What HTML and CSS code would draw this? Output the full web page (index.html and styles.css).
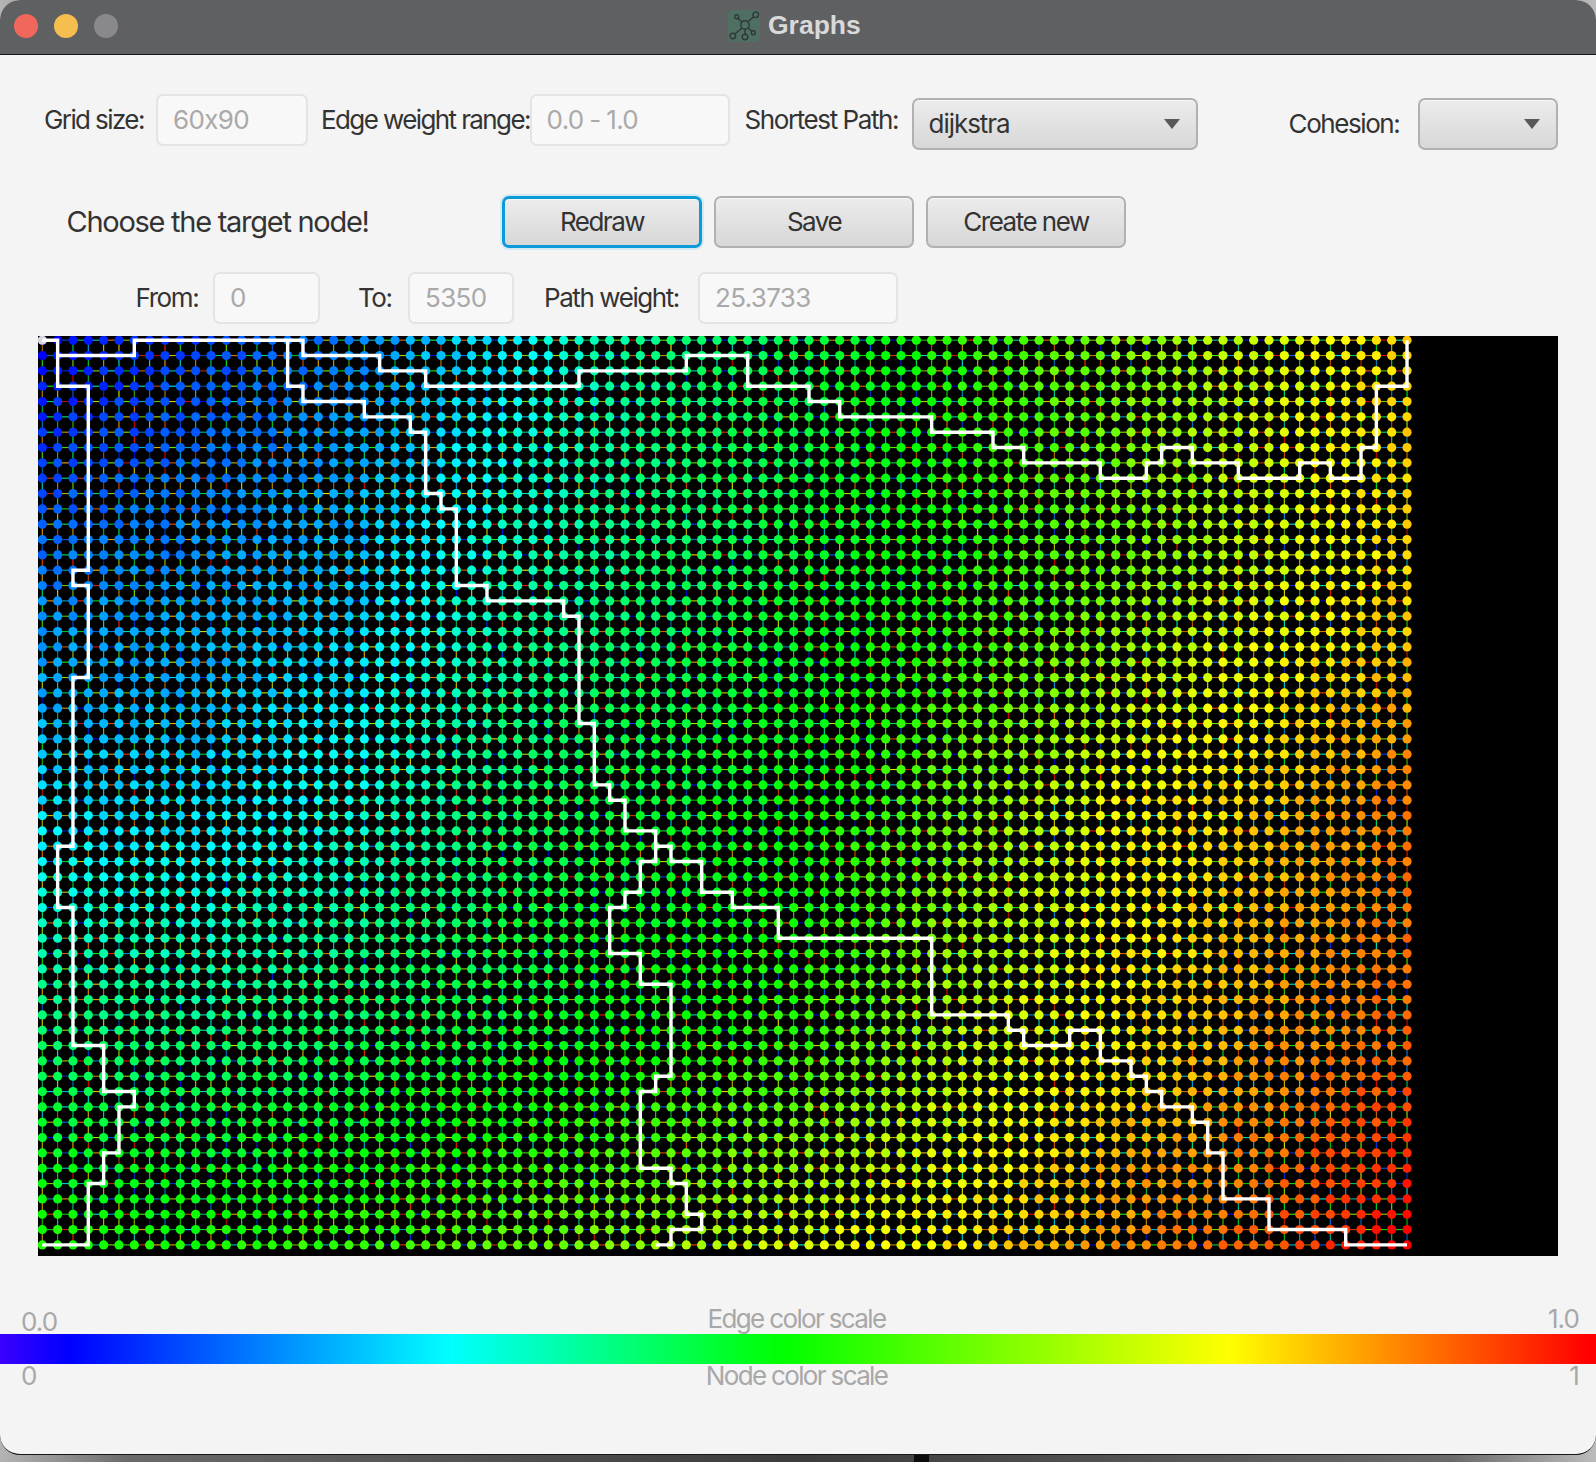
FILE: index.html
```html
<!DOCTYPE html>
<html lang="en">
<head>
<meta charset="utf-8">
<title>Graphs</title>
<link rel="stylesheet" href="styles.css">
</head>
<body>
<div class="window">
  <header class="titlebar">
    <div class="lights">
      <span class="light light-red"></span>
      <span class="light light-yellow"></span>
      <span class="light light-gray"></span>
    </div>
    <div class="title">
      <svg class="app-icon" width="32" height="32" viewBox="0 0 32 32">
        <rect width="32" height="32" rx="5" fill="#4f6f62"/>
        <g fill="none" stroke="#30383a" stroke-width="1.4">
          <path d="M9.6 8 L14 12 M19.5 12 L25.7 6.8 M14 18 L6.8 24 M17 19 L17 24 M20 17.5 L23.8 21.5"/>
          <circle cx="17" cy="15" r="4.2"/>
          <circle cx="8.7" cy="6.8" r="2"/>
          <circle cx="27.7" cy="4.8" r="2.8"/>
          <circle cx="4.8" cy="26" r="2.8"/>
          <circle cx="17" cy="27" r="2.8"/>
          <circle cx="25.3" cy="22.8" r="2"/>
        </g>
      </svg>
      <span class="title-text">Graphs</span>
    </div>
  </header>
  <main class="content">
    <div class="row row-settings">
      <label class="label label-tight w-grid">Grid size:</label>
      <div class="field w-f-grid">60x90</div>
      <label class="label label-tight w-edge">Edge weight range:</label>
      <div class="field w-f-edge">0.0 - 1.0</div>
      <label class="label w-short">Shortest Path:</label>
      <div class="combo w-c-path"><span>dijkstra</span><i class="arrow"></i></div>
      <label class="label w-cohesion">Cohesion:</label>
      <div class="combo w-c-cohesion"><span></span><i class="arrow"></i></div>
    </div>
    <div class="row row-actions">
      <div class="prompt">Choose the target node!</div>
      <button class="btn btn-focus">Redraw</button>
      <button class="btn">Save</button>
      <button class="btn">Create new</button>
    </div>
    <div class="row row-path">
      <label class="label w-from">From:</label>
      <div class="field w-f-from">0</div>
      <label class="label w-to">To:</label>
      <div class="field w-f-to">5350</div>
      <label class="label w-weight">Path weight:</label>
      <div class="field w-f-weight">25.3733</div>
    </div>
    <canvas id="graph" class="graph" width="1520" height="920"></canvas>
    <section class="scale">
      <div class="scale-row">
        <span class="scale-min">0.0</span>
        <span class="scale-name">Edge color scale</span>
        <span class="scale-max">1.0</span>
      </div>
      <div class="scale-bar"></div>
      <div class="scale-row scale-row-node">
        <span>0</span>
        <span class="scale-name">Node color scale</span>
        <span class="scale-max">1</span>
      </div>
    </section>
  </main>
</div>
<div class="dock-mark"></div>
<script src="script.js"></script>
</body>
</html>
```
FILE: styles.css
```css
* { box-sizing: border-box; }
html, body { margin: 0; height: 1462px; overflow: hidden; }
body {
  position: relative;
  font-family: Inter, "Liberation Sans", sans-serif;
  font-size: 26px;
  color: #333;
  background: linear-gradient(90deg, #b4b4b4 0, #6a6a6a 8%, #3c3c3c 50%, #6a6a6a 91%, #bcbcbc 100%);
}
.window {
  height: 1455px;
  background: #f4f4f4;
  border-radius: 20px;
  border-bottom: 1px solid #161616;
  overflow: hidden;
  display: flex;
  flex-direction: column;
}
.dock-mark {
  position: absolute;
  left: 914px;
  top: 1455px;
  width: 15px;
  height: 7px;
  background: #0c0c0c;
}
.titlebar {
  height: 55px;
  flex: none;
  display: flex;
  align-items: center;
  background: #5f6062;
  border-bottom: 1px solid #141414;
  padding-bottom: 2px;
}
.lights { display: flex; gap: 16px; margin-left: 14px; }
.light { width: 24px; height: 24px; border-radius: 50%; }
.light-red { background: #f1675b; }
.light-yellow { background: #f6bd4f; }
.light-gray { background: #89898b; }
.title { display: flex; align-items: center; margin-left: 610px; }
.app-icon { display: block; }
.title-text {
  margin: 0 0 2px 8px;
  font-family: "Liberation Sans", sans-serif;
  font-weight: 700;
  font-size: 26.5px;
  color: #d9d9d9;
}
.content { flex: 1; display: flex; flex-direction: column; }
.row { display: flex; align-items: flex-start; flex: none; white-space: nowrap; }
.row-settings { margin-top: 39px; padding-left: 44px; height: 56px; }
.row-actions { margin-top: 46px; padding-left: 66.5px; height: 52px; }
.row-path { margin-top: 24px; padding-left: 135.5px; height: 51px; }
.label {
  height: 51px;
  display: flex;
  align-items: center;
  letter-spacing: -1.42px;
  color: #333;
}
.label-tight { letter-spacing: -1.6px; }
.w-grid { width: 112px; }
.w-edge { width: 208.6px; margin-left: 13px; }
.w-short { width: 167px; margin-left: 15px; }
.w-cohesion { width: 129px; margin-left: 90.6px; margin-top: 4px; }
.w-from { width: 77.5px; }
.w-to { width: 50px; margin-left: 38px; }
.w-weight { width: 154px; margin-left: 30px; }
.field {
  height: 52px;
  display: flex;
  align-items: center;
  padding: 0 0 2px 15px;
  background: #f8f8f8;
  border: 2px solid #e4e4e4;
  border-radius: 7px;
  color: #a9a9a9;
  letter-spacing: -0.65px;
  word-spacing: -1px;
}
.w-f-grid { width: 152px; }
.w-f-edge { width: 200px; }
.w-f-from { width: 107px; }
.w-f-to { width: 106px; }
.w-f-weight { width: 200px; }
.combo {
  height: 52px;
  margin-top: 4px;
  display: flex;
  align-items: center;
  justify-content: space-between;
  padding: 0 16px 1px 15px;
  background: linear-gradient(180deg, #ececec 0, #d7d7d7 100%);
  border: 2px solid #b1b1b1;
  border-radius: 7px;
  box-shadow: inset 0 1px 0 #f6f6f6;
  color: #333;
  letter-spacing: -1.05px;
}
.w-c-path { width: 286.4px; }
.w-c-cohesion { width: 140.4px; }
.arrow {
  display: block;
  width: 0;
  height: 0;
  border-left: 8.5px solid transparent;
  border-right: 8.5px solid transparent;
  border-top: 10px solid #595959;
}
.prompt {
  width: 435.5px;
  height: 50px;
  display: flex;
  align-items: center;
  font-size: 29px;
  letter-spacing: -1.27px;
  color: #333;
}
.btn {
  width: 200px;
  height: 52px;
  margin-right: 12px;
  padding: 0 0 2px;
  font: inherit;
  letter-spacing: -1.5px;
  color: #333;
  background: linear-gradient(180deg, #ececec 0, #d7d7d7 100%);
  border: 2px solid #b1b1b1;
  border-radius: 7px;
  box-shadow: inset 0 1px 0 #f6f6f6;
}
.btn-focus {
  border: 3px solid #0a9bd8;
  box-shadow: 0 0 0 2px #d5e9f3, inset 0 1px 0 #f6f6f6;
}
.graph {
  display: block;
  flex: none;
  width: 1520px;
  height: 920px;
  margin: 13px 0 0 38px;
}
.scale { margin-top: 48px; flex: none; }
.scale-row {
  display: grid;
  grid-template-columns: 1fr auto 1fr;
  height: 30px;
  line-height: 30px;
  padding: 0 17px 0 21px;
  color: #a8a8a8;
  letter-spacing: -0.9px;
}
.scale-name { letter-spacing: -1.65px; margin-right: 7px; }
.scale-max { text-align: right; }
.scale-min { padding-top: 3px; }
.scale-row-node { margin-top: -3px; }
.scale-bar {
  height: 30px;
  background: linear-gradient(90deg, #3a00ff 0, #0000ff 4.4%, #00ffff 28.2%, #00ff00 49%, #ffff00 77%, #ff0000 99.5%);
}
```
FILE: script.js
```js
(function () {
  var ctx = document.getElementById('graph').getContext('2d');
  var COLS = 90, ROWS = 60, STEP = 15.334, OX = 4.3, OY = 4.2, NODE_R = 4.6;
  var seed = 12345;
  function rnd() {
    seed = (seed * 1664525 + 1013904223) >>> 0;
    var x = seed;
    x ^= x >>> 15;
    x = (x * 2654435761) >>> 0;
    x ^= x >>> 13;
    return (x >>> 0) / 4294967296;
  }
  var colKeys = [0, 10, 20, 30, 40, 50, 60, 70, 80, 89];
  var rowKeys = [0, 15, 30, 45, 59];
  var hues = [
    [240, 225, 210, 185, 150, 135, 110, 90, 70, 48],
    [212, 205, 195, 165, 145, 130, 115, 95, 70, 52],
    [190, 190, 175, 145, 130, 122, 92, 62, 48, 30],
    [145, 150, 140, 130, 122, 110, 76, 58, 38, 24],
    [115, 115, 108, 100, 85, 65, 55, 35, 20, 0]
  ];
  function locate(keys, v) {
    var i = 0;
    while (i < keys.length - 2 && v > keys[i + 1]) i++;
    return [i, (v - keys[i]) / (keys[i + 1] - keys[i])];
  }
  function hueAt(c, r) {
    var a = locate(colKeys, c), b = locate(rowKeys, r);
    var top = hues[b[0]][a[0]] * (1 - a[1]) + hues[b[0]][a[0] + 1] * a[1];
    var bot = hues[b[0] + 1][a[0]] * (1 - a[1]) + hues[b[0] + 1][a[0] + 1] * a[1];
    return top * (1 - b[1]) + bot * b[1];
  }
  function px(c) { return OX + STEP * c; }
  function py(r) { return OY + STEP * r; }

  ctx.fillStyle = '#000';
  ctx.fillRect(0, 0, 1520, 920);

  ctx.lineWidth = 1.15;
  function edge(x1, y1, x2, y2) {
    ctx.strokeStyle = 'hsl(' + Math.round(rnd() * 240) + ',100%,' + (34 + rnd() * 12) + '%)';
    ctx.beginPath();
    ctx.moveTo(x1, y1);
    ctx.lineTo(x2, y2);
    ctx.stroke();
  }
  var c, r;
  for (r = 0; r < ROWS; r++) {
    for (c = 0; c < COLS; c++) {
      if (c < COLS - 1) edge(px(c), py(r), px(c + 1), py(r));
      if (r < ROWS - 1) edge(px(c), py(r), px(c), py(r + 1));
    }
  }
  for (r = 0; r < ROWS; r++) {
    for (c = 0; c < COLS; c++) {
      var h = Math.max(0, Math.min(240, hueAt(c, r) + (rnd() - 0.5) * 9));
      ctx.fillStyle = 'hsl(' + h.toFixed(1) + ',100%,50%)';
      ctx.beginPath();
      ctx.arc(px(c), py(r), NODE_R, 0, Math.PI * 2);
      ctx.fill();
    }
  }
  ctx.fillStyle = '#d8d8d8';
  ctx.beginPath();
  ctx.arc(px(0), py(0), NODE_R, 0, Math.PI * 2);
  ctx.fill();

  var paths = [
    [[0,0],[1,0],[1,3],[3,3],[3,15],[2,15],[2,16],[3,16],[3,22],[2,22],[2,33],[1,33],[1,37],[2,37],[2,46],[4,46],[4,49],[6,49],[6,50],[5,50],[5,53],[4,53],[4,55],[3,55],[3,59],[0,59]],
    [[1,1],[6,1],[6,0],[17,0],[17,1],[22,1],[22,2],[25,2],[25,3],[35,3],[35,2],[42,2],[42,1],[46,1],[46,3],[50,3],[50,4],[52,4],[52,5],[58,5],[58,6],[62,6],[62,7],[64,7],[64,8],[69,8],[69,9],[72,9],[72,8],[73,8],[73,7],[75,7],[75,8],[78,8],[78,9],[82,9],[82,8],[84,8],[84,9],[86,9],[86,7],[87,7],[87,3],[89,3],[89,0]],
    [[16,0],[16,3],[17,3],[17,4],[21,4],[21,5],[24,5],[24,6],[25,6],[25,10],[26,10],[26,11],[27,11],[27,16],[29,16],[29,17],[34,17],[34,18],[35,18],[35,25],[36,25],[36,29],[37,29],[37,30],[38,30],[38,32],[40,32],[40,33],[41,33],[41,34],[43,34],[43,36],[45,36],[45,37],[48,37],[48,39],[58,39],[58,44],[63,44],[63,45],[64,45],[64,46],[67,46],[67,45],[69,45],[69,47],[71,47],[71,48],[72,48],[72,49],[73,49],[73,50],[75,50],[75,51],[76,51],[76,53],[77,53],[77,56],[80,56],[80,58],[85,58],[85,59],[89,59]],
    [[40,33],[40,34],[39,34],[39,36],[38,36],[38,37],[37,37],[37,40],[39,40],[39,42],[41,42],[41,48],[40,48],[40,49],[39,49],[39,54],[41,54],[41,55],[42,55],[42,57],[43,57],[43,58],[41,58],[41,59],[40,59]]
  ];
  ctx.strokeStyle = '#fff';
  ctx.lineWidth = 3.4;
  ctx.lineJoin = 'miter';
  ctx.lineCap = 'butt';
  paths.forEach(function (p) {
    ctx.beginPath();
    p.forEach(function (pt, i) {
      if (i === 0) ctx.moveTo(px(pt[0]), py(pt[1]));
      else ctx.lineTo(px(pt[0]), py(pt[1]));
    });
    ctx.stroke();
  });
})();
```
